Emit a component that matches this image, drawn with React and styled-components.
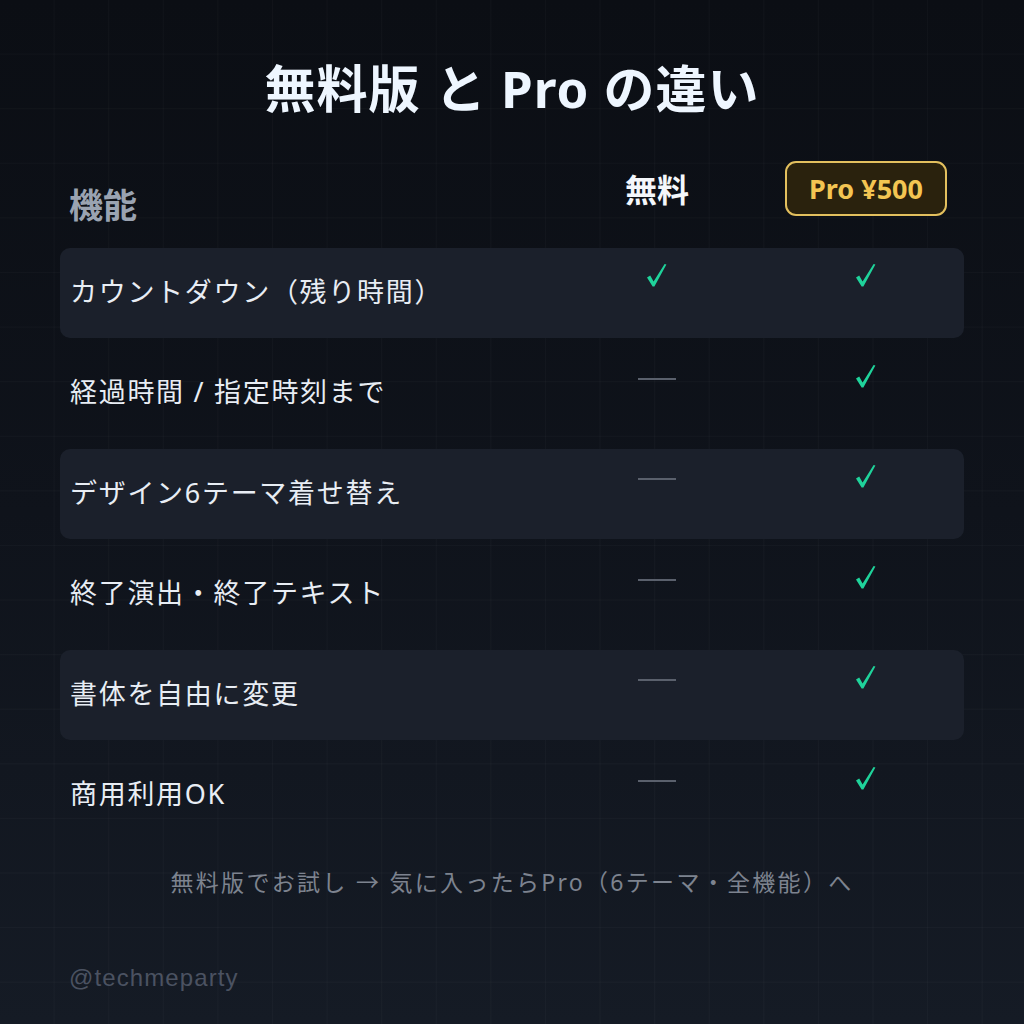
import React from 'react'
import styled, { createGlobalStyle } from 'styled-components'

const GlobalStyle = createGlobalStyle`
  html, body {
    margin: 0;
    padding: 0;
    background: #0c0f15;
  }
  body {
    font-family: "Noto Sans", "Noto Sans CJK JP", sans-serif;
  }
`

const Page = styled.div`
  width: 1024px;
  height: 1024px;
  box-sizing: border-box;
  padding: 60px 60px 0;
  display: flex;
  flex-direction: column;
  background-color: #0f131b;
  background-image:
    linear-gradient(rgba(255, 255, 255, 0.025) 1px, transparent 1px),
    linear-gradient(90deg, rgba(255, 255, 255, 0.025) 1px, transparent 1px),
    linear-gradient(180deg, #0b0e14 0%, #0f131b 50%, #151b25 100%);
  background-size: 54.6px 54.6px, 54.6px 54.6px, 100% 100%;
  background-position: -1px -1px, -1px -1px, 0 0;
  overflow: hidden;
`

const Title = styled.h1`
  margin: 0;
  font-size: 51px;
  line-height: 56px;
  font-weight: 700;
  color: #eef6ff;
  text-align: center;
  letter-spacing: 1px;
`

const Grid = styled.div`
  display: grid;
  grid-template-columns: 1fr 222px 196px;
  padding-left: 10px;
`

const Header = styled(Grid)`
  margin-top: 46px;
  height: 55px;
  align-items: center;
`

const FeatureHead = styled.div`
  align-self: start;
  padding-top: 24px;
  font-size: 34px;
  line-height: 38px;
  font-weight: 700;
  color: #9aa3b1;
  margin-left: -1px;
`

const FreeHead = styled.div`
  justify-self: center;
  font-size: 32px;
  line-height: 38px;
  font-weight: 700;
  color: #f4f7fb;
  margin-top: -6px;
`

const ProBadge = styled.div`
  justify-self: center;
  align-self: start;
  margin-top: -1px;
  width: 162px;
  height: 55px;
  box-sizing: border-box;
  border: 2px solid #e3c05e;
  border-radius: 11px;
  background: #2a220d;
  display: flex;
  align-items: center;
  justify-content: center;
  font-size: 27px;
  font-weight: 700;
  color: #f3c552;
`

const Rows = styled.div`
  margin-top: 31px;
  display: flex;
  flex-direction: column;
  gap: 10.6px;
`

const Row = styled(Grid)`
  height: 90px;
  border-radius: 10px;
  background: ${p => (p.$shaded ? '#1b202b' : 'transparent')};
  align-items: start;
`

const Label = styled.div`
  align-self: center;
  margin-top: -6px;
  font-size: 27px;
  letter-spacing: 1.7px;
  color: #e8edf4;
`

const Mark = styled.div`
  justify-self: center;
  padding-top: ${p => (p.$dash ? '29px' : '15px')};
`

const Dash = styled.div`
  width: 38px;
  height: 2px;
  background: #5a606c;
`

const Note = styled.p`
  margin: 26px 0 0;
  text-align: center;
  font-size: 23px;
  line-height: 31px;
  letter-spacing: 2.3px;
  color: #7d838f;
`

const Handle = styled.div`
  margin-top: 66px;
  padding-left: 9px;
  font-family: "Liberation Sans", Arial, sans-serif;
  font-size: 24px;
  letter-spacing: 1.1px;
  color: #4b5261;
`

function Check() {
  return (
    <svg width="22" height="25" viewBox="0 0 22 25">
      <path
        d="M1 14.5 L4.2 12.6 L7.6 18.4 L18.6 1 L20.4 1.6 L8.4 23.6 L6.6 23.6 Z"
        fill="#1fd39b"
      />
    </svg>
  )
}

const features = [
  { name: 'カウントダウン（残り時間）', free: true },
  { name: '経過時間 / 指定時刻まで', free: false },
  { name: 'デザイン6テーマ着せ替え', free: false },
  { name: '終了演出・終了テキスト', free: false },
  { name: '書体を自由に変更', free: false },
  { name: '商用利用OK', free: false },
]

export default function App() {
  return (
    <>
      <GlobalStyle />
      <Page>
        <Title>無料版 と Pro の違い</Title>
        <Header>
          <FeatureHead>機能</FeatureHead>
          <FreeHead>無料</FreeHead>
          <ProBadge>Pro ¥500</ProBadge>
        </Header>
        <Rows>
          {features.map((f, i) => (
            <Row key={i} $shaded={i % 2 === 0}>
              <Label>{f.name}</Label>
              {f.free ? (
                <Mark><Check /></Mark>
              ) : (
                <Mark $dash><Dash /></Mark>
              )}
              <Mark><Check /></Mark>
            </Row>
          ))}
        </Rows>
        <Note>無料版でお試し → 気に入ったらPro（6テーマ・全機能）へ</Note>
        <Handle>@techmeparty</Handle>
      </Page>
    </>
  )
}
